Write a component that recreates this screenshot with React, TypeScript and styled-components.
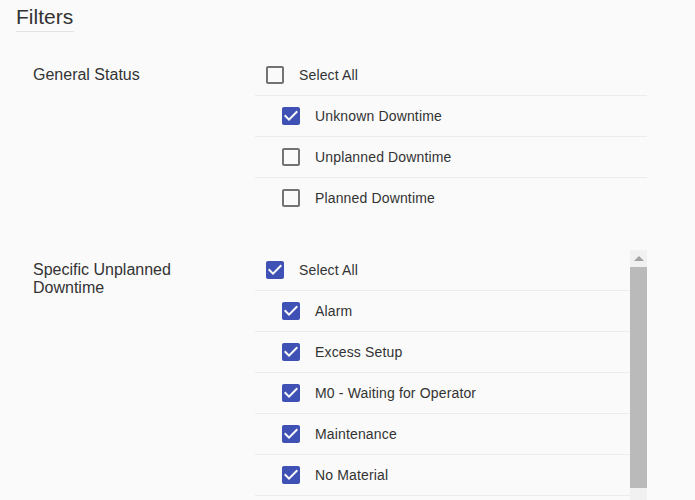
import React from "react";
import styled, { createGlobalStyle } from "styled-components";

const GlobalStyle = createGlobalStyle`
  html, body {
    margin: 0;
    padding: 0;
    background: #fafafa;
    overflow: hidden;
  }
  body {
    font-family: "Liberation Sans", Arial, sans-serif;
    color: #333;
  }
`;

const Page = styled.div`
  padding: 5px 16px 0 16px;
  display: flex;
  flex-direction: column;
`;

const Title = styled.h1`
  align-self: flex-start;
  margin: 0;
  font-size: 21px;
  font-weight: 400;
  line-height: 24px;
  padding: 0 1px 2px 0;
  border-bottom: 1px solid #e3e3e3;
  color: #333;
`;

const Sections = styled.div`
  margin-top: 23px;
  display: flex;
  flex-direction: column;
  gap: 31px;
`;

const Section = styled.section`
  display: flex;
  align-items: flex-start;
  padding: 0 32px 0 17px;
`;

const Label = styled.div`
  width: 180px;
  margin-right: 42px;
  padding-top: 11px;
  font-size: 16px;
  line-height: 18px;
  color: #333;
`;

const ListFrame = styled.div<{ $height?: number }>`
  flex: 1;
  min-width: 0;
  display: flex;
  ${(p) => (p.$height ? `height: ${p.$height}px; overflow: hidden;` : "")}
`;

const List = styled.div`
  flex: 1;
  min-width: 0;
  display: flex;
  flex-direction: column;
`;

const ScrollBar = styled.div`
  width: 17px;
  flex: none;
  display: flex;
  flex-direction: column;
  background: #f1f1f1;
`;

const ScrollButton = styled.div`
  height: 17px;
  flex: none;
  display: flex;
  align-items: center;
  justify-content: center;
  background: #f1f1f1;
`;

const Arrow = styled.div`
  width: 0;
  height: 0;
  border-left: 5px solid transparent;
  border-right: 5px solid transparent;
  border-bottom: 5px solid #a3a3a3;
  margin-top: -1px;
`;

const Thumb = styled.div<{ $size: number }>`
  height: ${(p) => p.$size}px;
  flex: none;
  background: #bababa;
`;

const Row = styled.label<{ $nested?: boolean; $divider: boolean }>`
  display: flex;
  align-items: center;
  height: 40px;
  flex: none;
  padding-left: ${(p) => (p.$nested ? 24 : 8)}px;
  border-bottom: 1px solid ${(p) => (p.$divider ? "#ececec" : "transparent")};
  cursor: pointer;
`;

const Box = styled.svg<{ $checked: boolean }>`
  width: 24px;
  height: 24px;
  flex: none;
  margin-right: 12px;
  fill: ${(p) => (p.$checked ? "#3f51b5" : "rgba(0, 0, 0, 0.54)")};
`;

const Text = styled.span`
  font-size: 14px;
  letter-spacing: 0.15px;
  line-height: 16px;
  color: #333;
  white-space: nowrap;
`;

const CHECKED =
  "M19 3H5c-1.11 0-2 .9-2 2v14c0 1.1.89 2 2 2h14c1.11 0 2-.9 2-2V5c0-1.1-.89-2-2-2zm-9 14l-5-5 1.41-1.41L10 14.17l7.59-7.59L19 8l-9 9z";
const UNCHECKED =
  "M19 5v14H5V5h14m0-2H5c-1.1 0-2 .9-2 2v14c0 1.1.9 2 2 2h14c1.1 0 2-.9 2-2V5c0-1.1-.9-2-2-2z";

type Item = { label: string; checked: boolean; nested?: boolean };

const CheckRow: React.FC<Item & { divider: boolean }> = ({
  label,
  checked,
  nested,
  divider,
}) => (
  <Row $nested={nested} $divider={divider}>
    <Box $checked={checked} viewBox="0 0 24 24" aria-hidden="true">
      <path d={checked ? CHECKED : UNCHECKED} />
    </Box>
    <Text>{label}</Text>
  </Row>
);

const general: Item[] = [
  { label: "Select All", checked: false },
  { label: "Unknown Downtime", checked: true, nested: true },
  { label: "Unplanned Downtime", checked: false, nested: true },
  { label: "Planned Downtime", checked: false, nested: true },
];

const specific: Item[] = [
  { label: "Select All", checked: true },
  { label: "Alarm", checked: true, nested: true },
  { label: "Excess Setup", checked: true, nested: true },
  { label: "M0 - Waiting for Operator", checked: true, nested: true },
  { label: "Maintenance", checked: true, nested: true },
  { label: "No Material", checked: true, nested: true },
];

export default function App() {
  return (
    <>
      <GlobalStyle />
      <Page>
        <Title>Filters</Title>
        <Sections>
          <Section>
            <Label>General Status</Label>
            <ListFrame>
              <List>
                {general.map((it, i) => (
                  <CheckRow
                    key={it.label}
                    {...it}
                    divider={i < general.length - 1}
                  />
                ))}
              </List>
            </ListFrame>
          </Section>
          <Section>
            <Label>Specific Unplanned Downtime</Label>
            <ListFrame $height={250}>
              <List>
                {specific.map((it) => (
                  <CheckRow key={it.label} {...it} divider />
                ))}
              </List>
              <ScrollBar>
                <ScrollButton>
                  <Arrow />
                </ScrollButton>
                <Thumb $size={221} />
              </ScrollBar>
            </ListFrame>
          </Section>
        </Sections>
      </Page>
    </>
  );
}
